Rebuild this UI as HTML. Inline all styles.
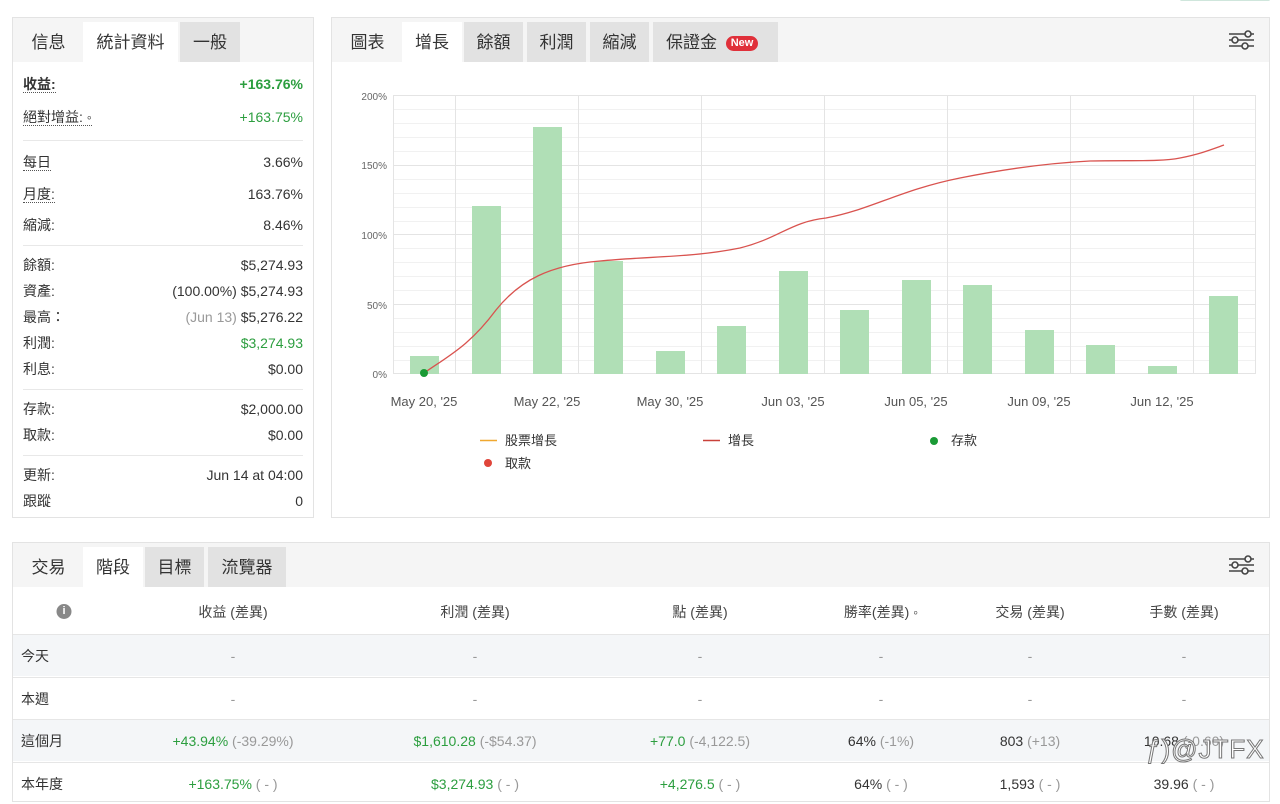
<!DOCTYPE html>
<html><head><meta charset="utf-8"><style>
*{box-sizing:border-box;margin:0;padding:0}
body{width:1280px;height:794px;overflow:hidden;background:#fff;font-family:"Liberation Sans","Noto Sans CJK TC",sans-serif;color:#333;font-size:14px;position:relative}
.panel{position:absolute;border:1px solid #e3e3e3;background:#fff}
.bar{position:absolute;left:0;right:0;top:0;height:44px;background:#f5f5f5}
.tab{position:absolute;top:4px;height:40px;line-height:42px;text-align:center;font-size:17px;color:#333}
.tab.on{background:#fff}
.tab.off{background:#e2e2e2}
.row{position:absolute;left:10px;right:10px;font-size:14px;height:20px;line-height:20px}
.row .l{position:absolute;left:0;top:0}
.row .l u{text-decoration:none;border-bottom:1px dotted #555}
.row .v{position:absolute;right:0;top:0}
.g{color:#2c9e3f}
.sep{position:absolute;left:10px;right:10px;height:1px;background:#e8e8e8}
.gr{color:#999}
.trow{position:absolute;left:0;right:0;height:42px;border-top:1px solid #e6e6e6;font-size:14px;line-height:20px}
.trow>span{position:absolute;top:11px;transform:translateX(-50%);white-space:nowrap}
.trow>.f{left:8px;transform:none}
</style></head><body>
<div style="position:absolute;left:1180px;top:-2px;width:90px;height:3px;background:#cfe6dc;border-radius:2px"></div>

<!-- Left panel -->
<div class="panel" style="left:12px;top:17px;width:302px;height:501px">
 <div class="bar"></div>
 <div class="tab" style="left:8px;width:55px">信息</div>
 <div class="tab on" style="left:70px;width:95px">統計資料</div>
 <div class="tab off" style="left:167px;width:60px">一般</div>
 <div class="row" style="top:56px"><span class="l"><u><b>收益:</b></u></span><span class="v g"><b>+163.76%</b></span></div>
 <div class="row" style="top:89px"><span class="l"><u>絕對增益: ◦</u></span><span class="v g">+163.75%</span></div>
 <div class="sep" style="top:122px"></div>
 <div class="row" style="top:134px"><span class="l"><u>每日</u></span><span class="v">3.66%</span></div>
 <div class="row" style="top:166px"><span class="l"><u>月度:</u></span><span class="v">163.76%</span></div>
 <div class="row" style="top:197px"><span class="l">縮減:</span><span class="v">8.46%</span></div>
 <div class="sep" style="top:227px"></div>
 <div class="row" style="top:237px"><span class="l">餘額:</span><span class="v">$5,274.93</span></div>
 <div class="row" style="top:263px"><span class="l">資產:</span><span class="v">(100.00%) $5,274.93</span></div>
 <div class="row" style="top:289px"><span class="l">最高：</span><span class="v"><span class="gr">(Jun 13)</span> $5,276.22</span></div>
 <div class="row" style="top:315px"><span class="l">利潤:</span><span class="v g">$3,274.93</span></div>
 <div class="row" style="top:341px"><span class="l">利息:</span><span class="v">$0.00</span></div>
 <div class="sep" style="top:371px"></div>
 <div class="row" style="top:381px"><span class="l">存款:</span><span class="v">$2,000.00</span></div>
 <div class="row" style="top:407px"><span class="l">取款:</span><span class="v">$0.00</span></div>
 <div class="sep" style="top:437px"></div>
 <div class="row" style="top:447px"><span class="l">更新:</span><span class="v">Jun 14 at 04:00</span></div>
 <div class="row" style="top:473px"><span class="l">跟蹤</span><span class="v">0</span></div>
</div>

<!-- Chart panel -->
<div class="panel" style="left:331px;top:17px;width:939px;height:501px">
 <div class="bar"></div>
 <div class="tab" style="left:8px;width:55px">圖表</div>
 <div class="tab on" style="left:70px;width:60px">增長</div>
 <div class="tab off" style="left:132px;width:59px">餘額</div>
 <div class="tab off" style="left:195px;width:59px">利潤</div>
 <div class="tab off" style="left:258px;width:59px">縮減</div>
 <div class="tab off" style="left:321px;width:125px;text-align:left;padding-left:13px">保證金 <span style="display:inline-block;background:#e0303a;color:#fff;font-size:11px;font-weight:bold;line-height:15px;padding:0 5px;border-radius:8px;vertical-align:2px;margin-left:4px">New</span></div>
 <svg style="position:absolute;left:896px;top:10px" width="26" height="24" viewBox="0 0 26 24" fill="none" stroke="#444" stroke-width="1.6"><path d="M1 6h25M1 12h25M1 18h25" /><circle cx="20" cy="6" r="3" fill="#f5f5f5"/><circle cx="7" cy="12" r="3" fill="#f5f5f5"/><circle cx="17" cy="18" r="3" fill="#f5f5f5"/></svg>
</div>
<svg style="position:absolute;left:0;top:0" width="1280" height="520" font-family="Liberation Sans, sans-serif">
 <g stroke="#f1f1f1" stroke-width="1">
  <path d="M393 109.5H1255M393 123.5H1255M393 137.5H1255M393 151.5H1255M393 179.5H1255M393 193.5H1255M393 207.5H1255M393 221.5H1255M393 248.5H1255M393 262.5H1255M393 276.5H1255M393 290.5H1255M393 318.5H1255M393 332.5H1255M393 346.5H1255M393 360.5H1255"/>
 </g>
 <g stroke="#e4e4e4" stroke-width="1">
  <path d="M393 95.5H1255M393 165.5H1255M393 234.5H1255M393 304.5H1255M393 373.5H1255"/>
  <path d="M393.5 95V374M455.5 95V374M578.5 95V374M701.5 95V374M824.5 95V374M947.5 95V374M1070.5 95V374M1193.5 95V374M1255.5 95V374"/>
 </g>
 <g fill="#666" font-size="10" text-anchor="end">
  <text x="387" y="100">200%</text><text x="387" y="169">150%</text><text x="387" y="239">100%</text><text x="387" y="309">50%</text><text x="387" y="378">0%</text>
 </g>
 <g fill="#b0dfb6">
  <rect x="410" y="356" width="29" height="18"/><rect x="472" y="206" width="29" height="168"/><rect x="533" y="127" width="29" height="247"/><rect x="594" y="261" width="29" height="113"/><rect x="656" y="351" width="29" height="23"/><rect x="717" y="326" width="29" height="48"/><rect x="779" y="271" width="29" height="103"/><rect x="840" y="310" width="29" height="64"/><rect x="902" y="280" width="29" height="94"/><rect x="963" y="285" width="29" height="89"/><rect x="1025" y="330" width="29" height="44"/><rect x="1086" y="345" width="29" height="29"/><rect x="1148" y="366" width="29" height="8"/><rect x="1209" y="296" width="29" height="78"/>
 </g>
 <path d="M424 373 C450 355 470 345 496 310 C520 280 550 265 600 261 C650 256 690 258 740 248 C780 238 790 222 826 218 C870 210 900 190 960 178 C1010 168 1050 163 1090 161 C1130 160 1160 162 1180 158 C1200 154 1210 150 1224 145" fill="none" stroke="#d9534f" stroke-width="1.3"/>
 <circle cx="424" cy="373" r="4" fill="#1a9a35"/>
 <g fill="#555" font-size="13" text-anchor="middle">
  <text x="424" y="406">May 20, '25</text><text x="547" y="406">May 22, '25</text><text x="670" y="406">May 30, '25</text><text x="793" y="406">Jun 03, '25</text><text x="916" y="406">Jun 05, '25</text><text x="1039" y="406">Jun 09, '25</text><text x="1162" y="406">Jun 12, '25</text>
 </g>
 <path d="M480 440.5H497" stroke="#f0a830" stroke-width="1.5"/>
 <path d="M703 440.5H720" stroke="#c9413a" stroke-width="1.5"/>
 <circle cx="934" cy="441" r="4" fill="#1a9a35"/>
 <circle cx="488" cy="463" r="4" fill="#e0453a"/>
 <g fill="#333" font-size="13" font-family="Liberation Sans, Noto Sans CJK TC, sans-serif">
  <text x="505" y="445">股票增長</text><text x="728" y="445">增長</text><text x="951" y="445">存款</text><text x="505" y="468">取款</text>
 </g>
</svg>

<!-- Bottom panel -->
<div class="panel" style="left:12px;top:542px;width:1258px;height:260px">
 <div class="bar"></div>
 <div class="tab" style="left:8px;width:55px">交易</div>
 <div class="tab on" style="left:70px;width:60px">階段</div>
 <div class="tab off" style="left:132px;width:59px">目標</div>
 <div class="tab off" style="left:195px;width:78px">流覽器</div>
 <svg style="position:absolute;left:1215px;top:10px" width="26" height="24" viewBox="0 0 26 24" fill="none" stroke="#444" stroke-width="1.6"><path d="M1 6h25M1 12h25M1 18h25" /><circle cx="20" cy="6" r="3" fill="#f5f5f5"/><circle cx="7" cy="12" r="3" fill="#f5f5f5"/><circle cx="17" cy="18" r="3" fill="#f5f5f5"/></svg>
 <div class="trow" style="top:47px;height:44px;border-top:none;color:#444">
  <span style="left:51px;top:14px;width:15px;height:15px;border-radius:50%;background:#888;color:#fff;font-size:11px;line-height:15px;text-align:center;font-weight:bold">i</span>
  <span style="left:220px;top:12px">收益 (差異)</span><span style="left:462px;top:12px">利潤 (差異)</span><span style="left:687px;top:12px">點 (差異)</span><span style="left:868px;top:12px">勝率(差異) ◦</span><span style="left:1017px;top:12px">交易 (差異)</span><span style="left:1171px;top:12px">手數 (差異)</span>
 </div>
 <div class="trow" style="top:91px;background:#f4f6f8"><span class="f">今天</span><span style="left:220px" class="gr">-</span><span style="left:462px" class="gr">-</span><span style="left:687px" class="gr">-</span><span style="left:868px" class="gr">-</span><span style="left:1017px" class="gr">-</span><span style="left:1171px" class="gr">-</span></div>
 <div class="trow" style="top:134px"><span class="f">本週</span><span style="left:220px" class="gr">-</span><span style="left:462px" class="gr">-</span><span style="left:687px" class="gr">-</span><span style="left:868px" class="gr">-</span><span style="left:1017px" class="gr">-</span><span style="left:1171px" class="gr">-</span></div>
 <div class="trow" style="top:176px;background:#f4f6f8"><span class="f">這個月</span><span style="left:220px"><span class="g">+43.94%</span> <span class="gr">(-39.29%)</span></span><span style="left:462px"><span class="g">$1,610.28</span> <span class="gr">(-$54.37)</span></span><span style="left:687px"><span class="g">+77.0</span> <span class="gr">(-4,122.5)</span></span><span style="left:868px">64% <span class="gr">(-1%)</span></span><span style="left:1017px">803 <span class="gr">(+13)</span></span><span style="left:1171px">10.68 <span class="gr">(-0.60)</span></span></div>
 <div class="trow" style="top:219px"><span class="f">本年度</span><span style="left:220px"><span class="g">+163.75%</span> <span class="gr">( - )</span></span><span style="left:462px"><span class="g">$3,274.93</span> <span class="gr">( - )</span></span><span style="left:687px"><span class="g">+4,276.5</span> <span class="gr">( - )</span></span><span style="left:868px">64% <span class="gr">( - )</span></span><span style="left:1017px">1,593 <span class="gr">( - )</span></span><span style="left:1171px">39.96 <span class="gr">( - )</span></span></div>
</div>
<div style="position:absolute;left:1146px;top:734px;font-size:26px;color:#fff;-webkit-text-stroke:1px #777;letter-spacing:1px">ƒ)@JTFX</div>
</body></html>
